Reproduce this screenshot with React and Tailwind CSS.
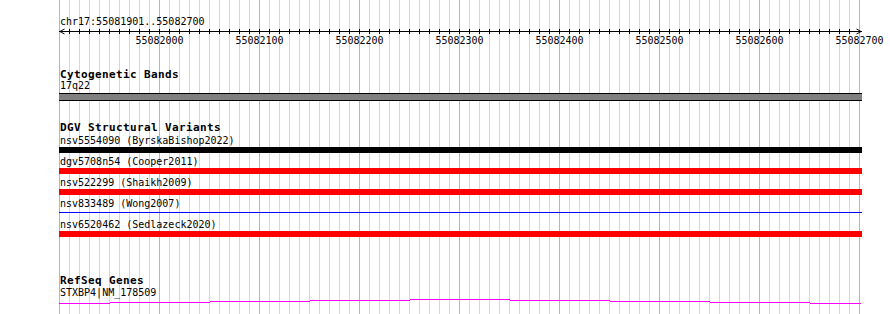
import React from "react";

const small = "font-['DejaVu_Sans_Mono',monospace] text-[10px] text-black";
const title = "font-['DejaVu_Sans_Mono',monospace] text-[11px] font-bold tracking-[0.38px] leading-[11px] text-black pl-[60px]";

function Grid() {
  const lines = [];
  for (let i = 0; i <= 80; i++) {
    const x = 59 + i * 10;
    const major = i % 10 === 0;
    lines.push(
      <rect key={i} x={x} y={0} width={1} height={314} fill={major ? "#8cc3e2" : "#b2e5e5"} />
    );
  }
  return (
    <svg className="absolute left-0 top-0" width="890" height="314">
      {lines}
    </svg>
  );
}

function Ruler() {
  const ticks = [];
  for (let x = 69; x <= 849; x += 10) {
    ticks.push(<rect key={x} x={x} y={1} width={1} height={5} fill="#000" />);
  }
  const labels = [];
  for (let i = 1; i <= 8; i++) {
    labels.push(
      <text
        key={i}
        x={59 + i * 100 + 0.5}
        y={16}
        textAnchor="middle"
        fontFamily="'DejaVu Sans Mono', monospace"
        fontSize="10"
        fill="#000"
      >
        {String(55082000 + (i - 1) * 100)}
      </text>
    );
  }
  return (
    <svg className="block" width="890" height="20">
      <rect x={59} y={3} width={803} height={1} fill="#000" />
      {ticks}
      <polyline points="64.5,1 60,3.5 64.5,6" fill="none" stroke="#000" strokeWidth="1" />
      <polyline points="856.5,1 861,3.5 856.5,6" fill="none" stroke="#000" strokeWidth="1" />
      {labels}
    </svg>
  );
}

const variants = [
  { label: "nsv5554090 (ByrskaBishop2022)", kind: "black" },
  { label: "dgv5708n54 (Cooper2011)", kind: "red" },
  { label: "nsv522299 (Shaikh2009)", kind: "red" },
  { label: "nsv833489 (Wong2007)", kind: "blue" },
  { label: "nsv6520462 (Sedlazeck2020)", kind: "red" },
];

function VariantRow({ label, kind }) {
  return (
    <div className="pb-[2px]">
      <div className={`${small} leading-[13px] pl-[60px] whitespace-pre`}>{label}</div>
      {kind === "blue" ? (
        <div className="ml-[59px] w-[803px] h-[6px] pt-[2px]">
          <div className="h-[1px] bg-[#0000ff]" />
        </div>
      ) : (
        <div className={`ml-[59px] w-[803px] h-[6px] ${kind === "black" ? "bg-black" : "bg-[#ff0000]"}`} />
      )}
    </div>
  );
}

function Gene() {
  const segs = [
    [59, 110, 303],
    [110, 210, 302],
    [210, 310, 301],
    [310, 410, 300],
    [410, 510, 299],
    [510, 610, 300],
    [610, 710, 301],
    [710, 810, 302],
    [810, 861, 303],
  ];
  return (
    <svg className="block" width="890" height="7">
      {segs.map(([a, b, y]) => (
        <rect key={a} x={a} y={y - 298} width={b - a} height={1} fill="#ff00ff" />
      ))}
    </svg>
  );
}

export default function App() {
  return (
    <div className="relative w-[890px] h-[314px] bg-white overflow-hidden">
      <Grid />
      <div className="relative">
        <div className={`${small} leading-[13px] pt-[15px] pl-[60px]`}>chr17:55081901..55082700</div>
        <Ruler />
        <div className={`${title} mt-[21px]`}>Cytogenetic Bands</div>
        <div className={`${small} leading-[10px] pl-[60px] mt-[1px]`}>17q22</div>
        <div className="mt-[2px] ml-[59px] w-[803px] h-[8px] bg-[#808080] border-y border-black" />
        <div className={`${title} mt-[21px]`}>DGV Structural Variants</div>
        <div className="mt-[1px]">
          {variants.map((v) => (
            <VariantRow key={v.label} {...v} />
          ))}
        </div>
        <div className={`${title} mt-[36px]`}>RefSeq Genes</div>
        <div className={`${small} leading-[10px] pl-[60px] mt-[2px]`}>STXBP4|NM_178509</div>
        <Gene />
      </div>
    </div>
  );
}
